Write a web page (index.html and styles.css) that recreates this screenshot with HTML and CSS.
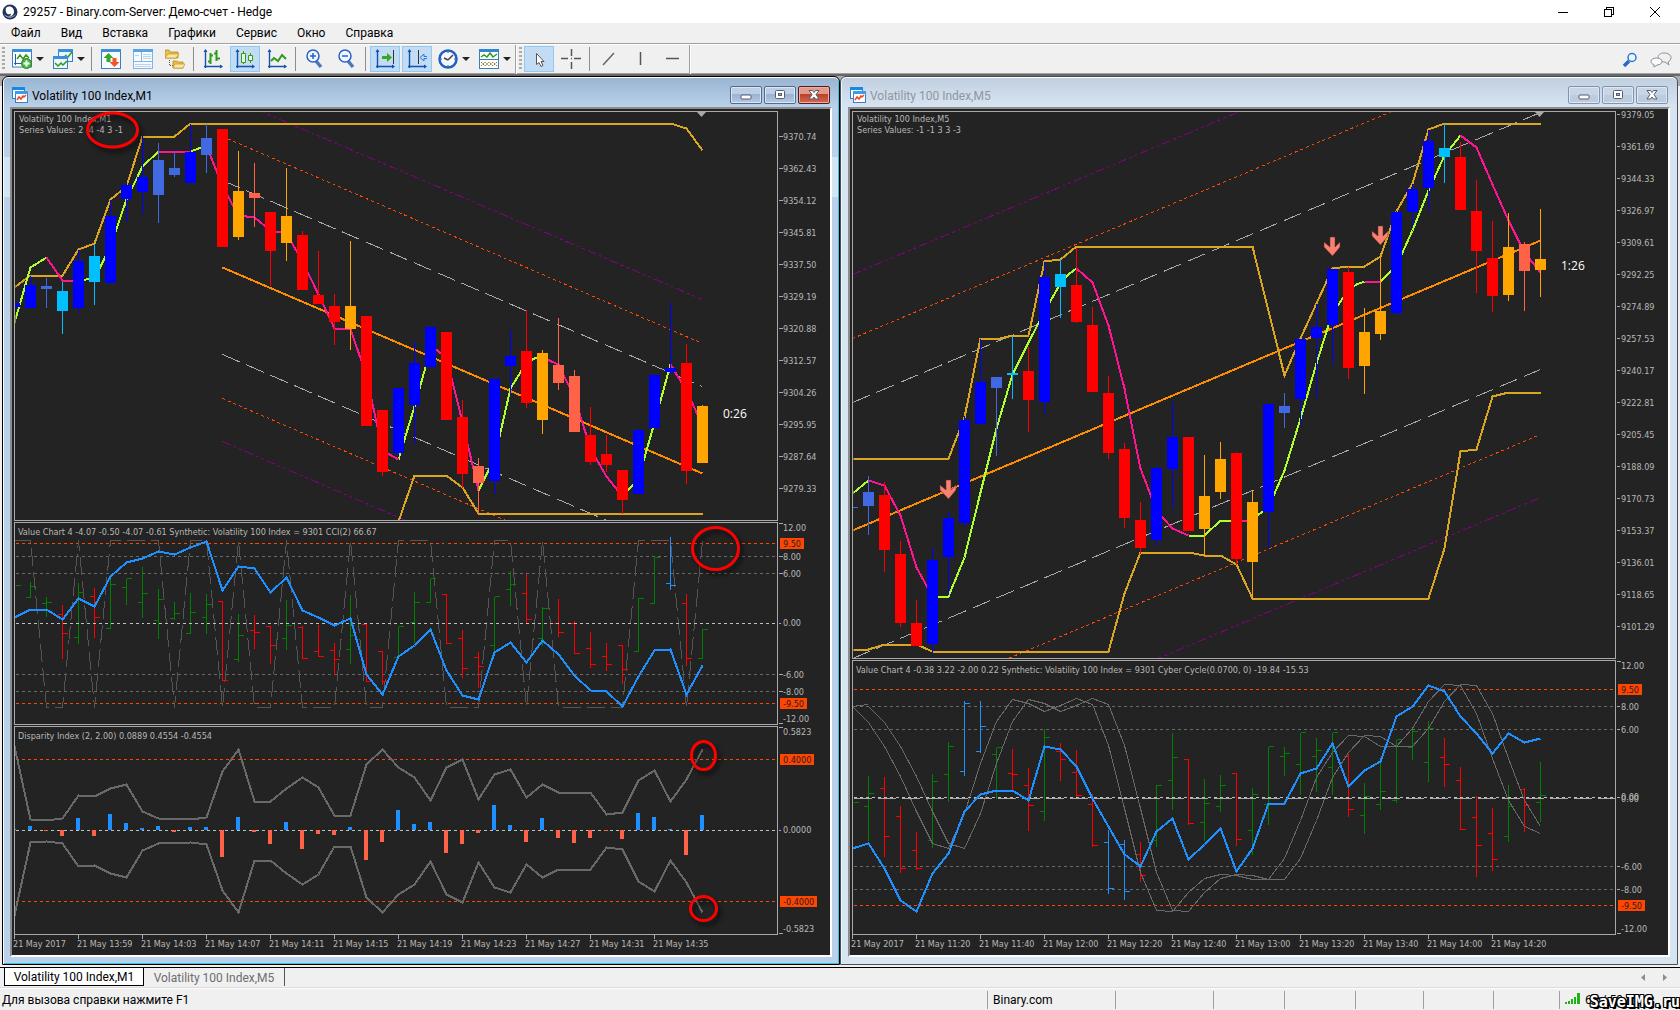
FILE: index.html
```html
<!DOCTYPE html>
<html lang="ru">
<head>
<meta charset="utf-8">
<title>29257 - Binary.com-Server: Демо-счет - Hedge</title>
<link rel="stylesheet" href="styles.css">
</head>
<body>
<svg class="defs" aria-hidden="true">
  <symbol id="i-chart-win" viewBox="0 0 16 16">
    <rect x=".5" y=".5" width="12" height="11" fill="#fff" stroke="#2a7fd0"/><rect width="13" height="3" fill="#1787e8"/>
    <rect x="3.5" y="4.500" width="12" height="11" fill="#fff" stroke="#3a80c0"/><rect x="3" y="4" width="13" height="3" fill="#3d9be9"/>
    <path d="M5 13l2-3 2 2 2-3 1 1 2-2" fill="none" stroke="#f0432a" stroke-width="1.500"/>
  </symbol>
  <symbol id="i-min" viewBox="0 0 12 12"><rect x="1" y="6" width="10" height="4" rx="1" fill="#fff" stroke="#555b70"/></symbol>
  <symbol id="i-max" viewBox="0 0 12 12"><rect x="1.500" y="1.500" width="9" height="8" rx="1" fill="#fff" stroke="#555b70"/><rect x="4.500" y="4.500" width="3" height="2" fill="#9fb8d8" stroke="#555b70"/></symbol>
  <symbol id="i-close" viewBox="0 0 12 12"><path d="M1 1.500h3.500L6 3.500l1.500-2H11L8 5.500l3 4.500H7.500L6 8 4.500 10H1l3-4.500z" fill="#fff" stroke="#555b70"/></symbol>
  <symbol id="i-axes" viewBox="0 0 20 20"><path d="M2.500 19V1M1 17.500h18" fill="none" stroke="#1450b4" stroke-width="1.400"/><path d="M2.500 0L.5 3h4zM20 17.500l-3-2v4z" fill="#1450b4"/></symbol>
</svg>

<header class="titlebar">
  <svg class="logo" viewBox="0 0 16 16"><circle cx="8" cy="8" r="7.500" fill="#22325a"/><path d="M4 4c3-3 8-1 8 3.500C12 11 9 13 6 12.500c2 0 3.500-1.500 3-3C8 11 4.500 10.500 4 8c-.3-1.500-.5-2.500 0-4z" fill="#fff"/><path d="M2 10c2 5 9 5 12 0-3 3-8 4-12 0z" fill="#9fb0cc"/></svg>
  <h1>29257 - Binary.com-Server: Демо-счет - Hedge</h1>
  <div class="sysbtns">
    <button aria-label="Свернуть"><svg viewBox="0 0 10 10"><path d="M0 5.500h10"/></svg></button>
    <button aria-label="Восстановить"><svg viewBox="0 0 10 10"><path d="M.5 2.500h7v7h-7zM2.500 2V.5h7v7H8"/></svg></button>
    <button aria-label="Закрыть"><svg viewBox="0 0 10 10"><path d="M0 0l10 10M10 0L0 10" shape-rendering="auto"/></svg></button>
  </div>
</header>

<nav class="menubar">
  <button>Файл</button><button>Вид</button><button>Вставка</button><button>Графики</button><button>Сервис</button><button>Окно</button><button>Справка</button>
</nav>

<div class="toolbar">
  <div class="tools">
    <i class="grip"></i>
    <button class="drop" aria-label="Новый график"><svg viewBox="0 0 20 20"><rect x=".5" y="1" width="19" height="17" fill="#fff" stroke="#3a80c0"/><rect y="0" width="20" height="3" fill="#3d8fd8"/><path d="M3.500 16V5M2 14.500h11" stroke="#2060b0" fill="none"/><path d="M5 10l3-4 3 4 3-4 3 3" fill="none" stroke="#2f9a1c" stroke-width="1.500"/><circle cx="14.500" cy="14.500" r="5" fill="#4fb53c" stroke="#2b8a1c"/><path d="M14.500 11.500v6M11.500 14.500h6" stroke="#fff" stroke-width="2"/></svg></button>
    <button class="drop" aria-label="Профили"><svg viewBox="0 0 20 20"><rect x="5.500" y=".5" width="14" height="12" fill="#eaf4fc" stroke="#3a80c0"/><rect x="5" width="15" height="3" fill="#3d8fd8"/><path d="M12 6l3 2 4-5" stroke="#2f9a1c" stroke-width="1.500" fill="none"/><rect x=".5" y="7.500" width="14" height="12" fill="#eaf4fc" stroke="#3a80c0"/><rect y="7" width="15" height="3" fill="#3d8fd8"/><path d="M2 14l3 3 3-3 2 2 4-4" stroke="#2f9a1c" stroke-width="1.500" fill="none"/></svg></button>
    <i class="sep"></i>
    <button aria-label="Обзор рынка"><svg viewBox="0 0 20 20"><rect x=".5" y=".5" width="19" height="19" fill="#f4fafe" stroke="#3a80c0"/><rect width="20" height="3" fill="#3d8fd8"/><path d="M7.500 4l5 5h-3v4h-4V9h-3z" fill="#39a82a"/><path d="M13.500 18l5-5h-3V9h-4v4h-3z" fill="#f0552c"/></svg></button>
    <button aria-label="Навигатор"><svg viewBox="0 0 20 20"><rect x=".5" y=".5" width="19" height="19" fill="#f4fafe" stroke="#7fb4e4"/><rect width="20" height="3" fill="#5aa4e4"/><path d="M8.500 3v9M1 12.500h18" stroke="#7fb4e4"/><path d="M10 5.500h8M10 7.500h8M10 9.500h8M2 15.500h16M2 17.500h16M2 6.500h4" stroke="#bcd4ea"/></svg></button>
    <button aria-label="Папка данных"><svg viewBox="0 0 20 20"><path d="M0 1h4l1 2h8v6H0z" fill="#e8c04c" stroke="#b48a20" stroke-width=".8"/><path d="M0 9l3-4h11l-3 4z" fill="#fbe79a" stroke="#b48a20" stroke-width=".6"/><path d="M4.500 11v5.500H8" stroke="#555" stroke-dasharray="1 1" fill="none"/><path d="M8 12h4l1 1h5v6H8z" fill="#e8c04c" stroke="#b48a20" stroke-width=".8"/><path d="M8 19l2-4h10l-2 4z" fill="#fbe79a" stroke="#b48a20" stroke-width=".6"/></svg></button>
    <i class="sep"></i>
    <button aria-label="Бары"><svg viewBox="0 0 20 20"><use href="#i-axes"/><path d="M7.500 4v11M5 12.500h2.500M7.500 6.500H10M13.500 1v11M11 4.500h2.500M13.500 9.500H17" stroke="#2f9a1c" stroke-width="2" fill="none"/></svg></button>
    <button class="on" aria-label="Свечи"><svg viewBox="0 0 20 20"><use href="#i-axes"/><path d="M8.500 2v13M15.500 4v10" stroke="#2f9a1c"/><path d="M6.500 4.500h4v9h-4zM13.500 6.500h4v5h-4z" fill="#e8fae0" stroke="#2f9a1c"/></svg></button>
    <button aria-label="Линия"><svg viewBox="0 0 20 20"><use href="#i-axes"/><path d="M4 12l3-3 4 3 4-6 4 4" stroke="#2f9a1c" stroke-width="2" fill="none"/></svg></button>
    <i class="sep"></i>
    <button aria-label="Увеличить"><svg viewBox="0 0 20 20"><path d="M11 12l5 6" stroke="#4a78b8" stroke-width="3.500"/><circle cx="8" cy="7" r="6" fill="#eef6ff" stroke="#2a62c4" stroke-width="1.500"/><path d="M8 4v6M5 7h6" stroke="#2a62c4" stroke-width="1.500"/></svg></button>
    <button aria-label="Уменьшить"><svg viewBox="0 0 20 20"><path d="M11 12l5 6" stroke="#4a78b8" stroke-width="3.500"/><circle cx="8" cy="7" r="6" fill="#eef6ff" stroke="#2a62c4" stroke-width="1.500"/><path d="M5 7h6" stroke="#2a62c4" stroke-width="1.500"/></svg></button>
    <i class="sep"></i>
    <button class="on" aria-label="Автопрокрутка"><svg viewBox="0 0 20 20"><use href="#i-axes"/><path d="M18.500 1v14" stroke="#333"/><path d="M7 7h5V4l5 4.500-5 4.500v-3H7z" fill="#35a824"/></svg></button>
    <button class="on" aria-label="Сдвиг графика"><svg viewBox="0 0 20 20"><use href="#i-axes"/><path d="M11.500 1v14" stroke="#333"/><path d="M20 7.500h-3V5l-4 3.500 4 3.500V9.500h3" fill="none" stroke="#2a78d8"/></svg></button>
    <button class="drop" aria-label="Таймфрейм"><svg viewBox="0 0 20 20"><circle cx="10" cy="10" r="8.500" fill="#f4f9ff" stroke="#1d5fc4" stroke-width="2.500"/><path d="M10 11l5-5M10 11l-4-2" stroke="#444" stroke-width="1.500"/><path d="M10 3v1M10 16v1M3 10h1M16 10h1" stroke="#555"/></svg></button>
    <button class="drop" aria-label="Шаблоны"><svg viewBox="0 0 20 20"><rect x=".5" y=".5" width="19" height="19" fill="#fff" stroke="#3a80c0"/><rect width="20" height="3" fill="#2f86d8"/><path d="M1 10.500h18" stroke="#3a80c0"/><path d="M2 8l3-2 3 2 3-4 3 4 4-3" stroke="#2f9a1c" stroke-width="1.500" fill="none"/><path d="M2 17l4-4 4 4 4-4 4 4" stroke="#f0552c" fill="none" stroke-dasharray="2 1"/><path d="M2 13l4 4 4-4 4 4 4-4" stroke="#2f9a1c" fill="none" stroke-dasharray="2 1"/></svg></button>
  </div>
  <div class="tools">
    <i class="grip"></i>
    <button class="on" aria-label="Курсор"><svg viewBox="0 0 20 20"><path d="M7.500 4.500v11l2.500-2 2 4 2-1-2-4h3z" fill="#fff" stroke="#555"/></svg></button>
    <button aria-label="Перекрестие"><svg viewBox="0 0 20 20"><path d="M10.500 0v7M10.500 13v7M0 9.500h7M13 9.500h7M10 9.500h1" stroke="#555" stroke-width="1.500"/></svg></button>
    <i class="sep"></i>
    <button aria-label="Трендовая линия"><svg viewBox="0 0 20 20"><path d="M4 16L15 4" stroke="#666" stroke-width="1.500"/></svg></button>
    <button aria-label="Вертикальная линия"><svg viewBox="0 0 20 20"><path d="M9.500 3v13" stroke="#555" stroke-width="1.500"/></svg></button>
    <button aria-label="Горизонтальная линия"><svg viewBox="0 0 20 20"><path d="M3 9.500h13" stroke="#555" stroke-width="1.500"/></svg></button>
  </div>
  <div class="extras">
    <button aria-label="Поиск"><svg viewBox="0 0 20 20"><path d="M9 11l-5 5" stroke="#2a68c8" stroke-width="3.500"/><circle cx="12" cy="7.500" r="4" fill="#eef6ff" stroke="#2a78d8" stroke-width="1.500"/></svg></button>
    <button aria-label="Чат"><svg viewBox="0 0 22 20"><path d="M14 3c4 0 7 2 7 4.500S19 12 18 12l1 3-4-3c-4 0-7-2-7-4.500S10 3 14 3z" fill="#eef0f2" stroke="#8a8f96"/><path d="M6.500 8C10 8 12 9.500 12 11.500S10 15 7 15l-3 2v-2.500c-2-.5-3-1.500-3-3C1 9.500 3 8 6.500 8z" fill="#fafbfc" stroke="#8a8f96"/></svg></button>
  </div>
</div>

<main class="desk">
  <section class="win active">
    <header>
      <svg class="wicon"><use href="#i-chart-win"/></svg><h2>Volatility 100 Index,M1</h2>
      <button aria-label="Свернуть"><svg><use href="#i-min"/></svg></button><button aria-label="Развернуть"><svg><use href="#i-max"/></svg></button><button class="x" aria-label="Закрыть"><svg><use href="#i-close"/></svg></button>
    </header>
    <div class="client">
    <svg class="chart" viewBox="12 109 818 846">
      <defs>
        <clipPath id="clip-m1"><rect x="15" y="112" width="762" height="408"/></clipPath>
      </defs>
      <g class="px">
        <g clip-path="url(#clip-m1)">
          <path class="ch-purple" d="M256 109L702 299M222 441L410 522"/>
          <path class="ch-red" d="M222 136L702 343M222 398L510 522"/>
          <path class="ch-gray" d="M222 180L702 386M222 354L611 522"/>
          <path class="ch-mid" d="M222 267L702 473"/>
          <path class="gold" d="M14 288L30 276H62L78 250 94 244 110 200 126 187 142 137H174L190 124H670L686 129 702 151M398 522L414 476H446L462 488 478 514H702"/>
          <path class="up" d="M14 322L30 267 46 257M78 280L94 278 110 246 126 199 142 166 158 151M190 151L206 145M398 459L414 406 430 349M478 490L494 458 510 388 526 362 534 358 542 357M622 496L638 478 654 422 670 364"/>
          <path class="down" d="M46 257L62 280H78M158 151H190M206 145L222 186 238 215 254 217 270 230 286 233 302 261 318 294 334 328 350 329 366 375 382 450 398 459M430 345L446 357 462 422 478 490M542 357L558 364 574 397 590 448 606 476 622 496M670 364L686 390 702 425"/>
        </g>
      </g>
      <g class="vx" data-candles="m1"></g>
      <g class="px">
        <path class="level" d="M15 556H776M15 573H776M15 674H776M15 691H776"/>
        <path class="level hot" d="M15 543H776M15 703H776M15 759H776M15 901H776"/>
        <path class="cci" d="M14 540H30L46 707H62L78 540 94 707 110 540H158L174 707 190 540H206L222 707 238 540 254 707H270L286 540 302 707H334L350 540 366 707H382L398 540H430L446 707H478L494 540H510L526 707 542 540 558 707H622L638 540H670L686 707 702 540"/>
        <g data-ohlc="m1"></g>
        <path class="level zero" d="M15 623H776"/>
        <path class="synth" d="M14 617L30 609 46 609 62 619 78 598 94 606 110 576 126 562 142 558 158 551 174 554 190 547 206 541 222 590 238 566 254 568 270 592 286 577 302 610 318 617 334 625 350 618 366 674 382 694 398 656 414 645 430 629 446 670 462 695 478 699 494 652 510 642 526 662 542 640 558 654 574 675 590 690 606 691 622 706 638 676 654 650 670 649 686 694 702 665"/>
        <path id="env" class="env" d="M14 746L30 819 46 820 62 818 78 795 94 796 110 788 126 784 142 811 158 818 190 819 206 817 222 771 238 749 254 801 270 801 286 788 302 777 318 787 334 815 350 815 366 764 382 749 398 767 414 777 430 800 446 767 462 759 478 799 494 774 510 769 526 797 542 784 558 792 590 792 606 814 622 812 638 780 654 770 670 801 686 779 702 749"/>
        <use href="#env" transform="translate(0 1661) scale(1 -1)"/>
        <path class="level zero" d="M15 830H776"/>
      </g>
      <g data-hist="m1"></g>
      <g class="px">
        <path class="frame" d="M777 520H14V111H777V520M14 522H777V724H14zM14 726H777V934H14z"/>
        <path class="frame" d="M778 136h4m-4 32h4m-4 32h4m-4 32h4m-4 32h4m-4 32h4m-4 32h4m-4 32h4m-4 32h4m-4 32h4m-4 32h4m-4 32h4M778 523h4m-4 33h4m-4 17h4m-4 50h2m-2 51h4m-4 17h4m-4 32h4M778 727h4m-4 103h2m-2 103h4"/>
        <path class="frame" d="M14 934v4m64-4v4m64-4v4m64-4v4m64-4v4m64-4v4m64-4v4m64-4v4m64-4v4m64-4v4m64-4v4"/>
      </g>
      <path class="mark" d="M697 112h9l-4.500 5z"/>
      <g class="tag"><rect x="780" y="538" width="24" height="11"/><rect x="780" y="698" width="27" height="11"/><rect x="780" y="754" width="34" height="11"/><rect x="780" y="896" width="37" height="11"/></g>
      <g class="txt">
        <text x="19" y="122">Volatility 100 Index,M1</text><text x="19" y="133">Series Values: 2 -4 -4 3 -1</text>
        <text x="18" y="535">Value Chart 4 -4.07 -0.50 -4.07 -0.61 Synthetic: Volatility 100 Index = 9301 CCI(2) 66.67</text>
        <text x="18" y="739">Disparity Index (2, 2.00) 0.0889 0.4554 -0.4554</text>
        <text x="783" y="140">9370.74</text><text x="783" y="172">9362.43</text><text x="783" y="204">9354.12</text><text x="783" y="236">9345.81</text><text x="783" y="268">9337.50</text><text x="783" y="300">9329.19</text><text x="783" y="332">9320.88</text><text x="783" y="364">9312.57</text><text x="783" y="396">9304.26</text><text x="783" y="428">9295.95</text><text x="783" y="460">9287.64</text><text x="783" y="492">9279.33</text>
        <text x="783" y="531">12.00</text><text x="783" y="547" class="inv">9.50</text><text x="783" y="560">8.00</text><text x="783" y="577">6.00</text><text x="783" y="626">0.00</text><text x="783" y="678">-6.00</text><text x="783" y="695">-8.00</text><text x="783" y="707" class="inv">-9.50</text><text x="783" y="722">-12.00</text>
        <text x="783" y="735">0.5823</text><text x="783" y="763" class="inv">0.4000</text><text x="783" y="833">0.0000</text><text x="783" y="905" class="inv">-0.4000</text><text x="783" y="932">-0.5823</text>
        <text x="13" y="947">21 May 2017</text><text x="77" y="947">21 May 13:59</text><text x="141" y="947">21 May 14:03</text><text x="205" y="947">21 May 14:07</text><text x="269" y="947">21 May 14:11</text><text x="333" y="947">21 May 14:15</text><text x="397" y="947">21 May 14:19</text><text x="461" y="947">21 May 14:23</text><text x="525" y="947">21 May 14:27</text><text x="589" y="947">21 May 14:31</text><text x="653" y="947">21 May 14:35</text>
      </g>
      <text class="clock" x="723" y="418">0:26</text>
      <g class="rings"><ellipse cx="112.500" cy="130" rx="25" ry="17"/><ellipse cx="715.500" cy="548.500" rx="23" ry="21"/><ellipse cx="703.500" cy="755.500" rx="12" ry="14"/><ellipse cx="703.500" cy="908.500" rx="13" ry="12"/></g>
    </svg>
    </div>
  </section>

  <section class="win">
    <header>
      <svg class="wicon"><use href="#i-chart-win"/></svg><h2>Volatility 100 Index,M5</h2>
      <button aria-label="Свернуть"><svg><use href="#i-min"/></svg></button><button aria-label="Развернуть"><svg><use href="#i-max"/></svg></button><button aria-label="Закрыть"><svg><use href="#i-close"/></svg></button>
    </header>
    <div class="client">
    <svg class="chart" viewBox="850 109 818 846">
      <defs>
        <clipPath id="clip-m5"><rect x="853" y="112" width="762" height="546"/></clipPath>
        <path id="arrow" d="M-2 0h5v10l5-5v5L.5 19-8 10V5l6 5z"/>
      </defs>
      <g class="px">
        <g clip-path="url(#clip-m5)">
          <path class="ch-purple" d="M852 274L1244 109M1153 660L1540 497"/>
          <path class="ch-red" d="M852 338L1396 109M1003 660L1540 434"/>
          <path class="ch-gray" d="M852 402L1540 112M852 658L1540 369"/>
          <path class="ch-mid" d="M852 530L1540 240"/>
          <path class="gold" d="M852 459H948L964 418 980 339H1000L1012 336H1028L1044 262 1060 260 1076 247H1252L1284 376 1300 339 1316 304 1332 269 1348 267H1364L1380 257 1396 212 1412 184 1428 130 1444 124H1540M852 650H868L884 645H916L932 652H1108L1124 594 1140 553H1188L1204 556H1220L1236 565 1252 599H1428L1444 549 1460 452 1476 450 1492 397 1508 393H1540"/>
          <path class="up" d="M852 493L868 480M932 596H948L964 557 980 492 996 428 1012 374 1028 342 1044 311 1060 283 1068 274 1076 268M1188 535H1204L1220 520H1236M1250 520L1268 507 1284 470 1300 418 1316 363 1332 312 1348 290 1356 284 1364 281M1380 281L1396 265 1412 230 1428 190 1444 155 1460 135"/>
          <path class="down" d="M868 480L884 485 900 515 916 567 932 596M1076 268L1092 282 1108 325 1124 388 1140 468 1156 510 1172 528 1188 535M1236 520H1250M1364 281H1380M1460 135L1476 147 1492 184 1508 220 1524 252 1540 272"/>
        </g>
      </g>
      <g class="arrows"><use href="#arrow" x="948" y="480"/><use href="#arrow" x="1332" y="237"/><use href="#arrow" x="1380" y="226"/></g>
      <g class="vx" data-candles="m5"></g>
      <g class="px">
        <path class="level" d="M853 706H1614M853 729H1614M853 866H1614M853 889H1614"/>
        <path class="level hot" d="M853 689H1614M853 905H1614"/>
        <g data-ohlc="m5"></g>
        <path id="cyc" class="cyc" d="M852 706L868 722 884 746 900 776 916 811 932 843 948 848 964 813 980 763 996 721 1012 699 1028 703 1044 711 1060 705 1076 698 1092 704 1108 745 1124 808 1140 872 1156 910 1172 911 1188 892 1204 878 1220 874 1236 875 1252 879 1268 879 1284 858 1300 820 1316 777 1332 752 1348 735 1364 736 1380 746 1396 746 1412 728 1428 701 1444 684 1460 685 1476 713 1492 758 1508 800 1524 826"/>
        <use href="#cyc" x="16"/><path class="cyc" d="M852 706L868 704M1524 826L1540 833"/>
        <path class="level zero" d="M853 797H1614"/><path class="level zero long" d="M853 798H1614"/>
        <path class="synth" d="M852 848L868 843 884 868 900 900 916 911 932 873 948 853 964 811 980 794 996 790 1012 790 1028 800 1044 746 1060 749 1076 766 1092 798 1108 826 1124 854 1140 866 1156 831 1172 818 1188 859 1204 844 1220 828 1236 871 1252 848 1268 803 1284 803 1300 773 1316 768 1332 743 1348 786 1364 770 1380 761 1396 716 1412 706 1428 685 1444 691 1460 716 1476 733 1492 753 1508 733 1524 742 1540 738"/>
        <path class="frame" d="M852 111H1615V658H852zM852 660H1615V934H852z"/>
        <path class="frame" d="M1616 114h3m-3 32h3m-3 32h3m-3 32h3m-3 32h3m-3 32h3m-3 32h3m-3 32h3m-3 32h3m-3 32h3m-3 32h3m-3 32h3m-3 32h3m-3 32h3m-3 32h3m-3 32h3m-3 32h3M1616 661h4m-4 45h3m-3 23h3m-3 68h3m-3 69h3m-3 23h3m-3 44h4"/>
        <path class="frame" d="M852 934v4m64-4v4m64-4v4m64-4v4m64-4v4m64-4v4m64-4v4m64-4v4m64-4v4m64-4v4m64-4v4"/>
      </g>
      <path class="mark" d="M1535 112h9l-4.500 5z"/>
      <g class="tag"><rect x="1618" y="684" width="24" height="11"/><rect x="1618" y="900" width="27" height="11"/></g>
      <g class="txt">
        <text x="857" y="122">Volatility 100 Index,M5</text><text x="857" y="133">Series Values: -1 -1 3 3 -3</text>
        <text x="856" y="673">Value Chart 4 -0.38 3.22 -2.00 0.22 Synthetic: Volatility 100 Index = 9301 Cyber Cycle(0.0700, 0) -19.84 -15.53</text>
        <text x="1621" y="118">9379.05</text><text x="1621" y="150">9361.69</text><text x="1621" y="182">9344.33</text><text x="1621" y="214">9326.97</text><text x="1621" y="246">9309.61</text><text x="1621" y="278">9292.25</text><text x="1621" y="310">9274.89</text><text x="1621" y="342">9257.53</text><text x="1621" y="374">9240.17</text><text x="1621" y="406">9222.81</text><text x="1621" y="438">9205.45</text><text x="1621" y="470">9188.09</text><text x="1621" y="502">9170.73</text><text x="1621" y="534">9153.37</text><text x="1621" y="566">9136.01</text><text x="1621" y="598">9118.65</text><text x="1621" y="630">9101.29</text>
        <text x="1621" y="669">12.00</text><text x="1621" y="693" class="inv">9.50</text><text x="1621" y="710">8.00</text><text x="1621" y="733">6.00</text><text x="1621" y="800">0.00</text><text x="1621" y="802">0.00</text><text x="1621" y="870">-6.00</text><text x="1621" y="893">-8.00</text><text x="1621" y="909" class="inv">-9.50</text><text x="1621" y="932">-12.00</text>
        <text x="851" y="947">21 May 2017</text><text x="915" y="947">21 May 11:20</text><text x="979" y="947">21 May 11:40</text><text x="1043" y="947">21 May 12:00</text><text x="1107" y="947">21 May 12:20</text><text x="1171" y="947">21 May 12:40</text><text x="1235" y="947">21 May 13:00</text><text x="1299" y="947">21 May 13:20</text><text x="1363" y="947">21 May 13:40</text><text x="1427" y="947">21 May 14:00</text><text x="1491" y="947">21 May 14:20</text>
      </g>
      <text class="clock" x="1561" y="270">1:26</text>
    </svg>
    </div>
  </section>
</main>

<div class="tabs">
  <button class="sel">Volatility 100 Index,M1</button><button>Volatility 100 Index,M5</button>
  <div class="scroll"><button aria-label="Назад"><svg viewBox="0 0 6 8"><path d="M5 0v7L1 3.500z"/></svg></button><button aria-label="Вперед"><svg viewBox="0 0 6 8"><path d="M1 0v7l4-3.500z"/></svg></button></div>
</div>

<footer class="status">
  <span class="hint">Для вызова справки нажмите F1</span>
  <span class="c128">Binary.com</span><span class="c98"></span><span class="c71"></span><span class="c71"></span><span class="c68"></span><span class="c70"></span><span class="c66"></span>
  <span class="net"><svg viewBox="0 0 16 12"><path d="M0 9h2v2H0zM3 8h2v3H3zM6 6h2v5H6zM9 4h2v7H9zM12 0h3v11h-3z" fill="#22b114"/></svg>65 / 59 Kb</span>
  <b class="stamp">SaveIMG.ru</b>
</footer>
<script src="charts.js"></script>
</body>
</html>
```
FILE: styles.css
```css
* { box-sizing: border-box; }
body {
  margin: 0;
  min-height: 100vh;
  display: flex;
  flex-direction: column;
  background: #f0f0f0;
  color: #000;
  font: 12px/16px Roboto, "Noto Sans", sans-serif;
}
button { margin: 0; padding: 0; border: 0; background: none; color: inherit; font: inherit; }
h1, h2 { margin: 0; font: inherit; }
.defs { position: absolute; width: 0; height: 0; }

.titlebar { display: flex; align-items: center; height: 23px; padding: 0 2px; background: #fff; }
.logo { width: 16px; height: 16px; margin-right: 5px; }
.sysbtns { display: flex; margin-left: auto; }
.sysbtns button { width: 46px; height: 20px; display: grid; place-items: center; }
.sysbtns svg { width: 10px; height: 10px; fill: none; stroke: #000; shape-rendering: crispEdges; }

.menubar { display: flex; height: 21px; padding: 0 1px; border-bottom: 1px solid #a0a0a0; }
.menubar button { padding: 0 10px; }

.toolbar { display: flex; height: 32px; border-top: 1px solid #fff; border-bottom: 2px solid #696969; box-shadow: inset 0 -1px #a0a0a0; }
.tools { display: flex; align-items: center; gap: 2px; padding: 0 1px 1px 2px; border-right: 1px solid #a0a0a0; box-shadow: 1px 0 #fff; }
.tools button { width: 30px; height: 26px; padding: 2px 4px; border: 1px solid transparent; }
.tools button.on { background: #c2dcf3; border-color: #90c8f6; }
.tools svg, .extras svg { display: block; flex: none; width: 20px; height: 20px; }
.tools .drop { display: flex; align-items: center; width: 39px; padding: 2px 0 2px 3px; }
.drop::after { content: ""; margin-left: 4px; border: 4px solid transparent; border-top-color: #222; border-bottom: 0; }
.grip { width: 3px; height: 24px; margin-right: 1px; background: repeating-linear-gradient(#aaa 0 2px, transparent 2px 4px); }
.tools + .tools { padding-left: 3px; }
.tools + .tools .grip { margin-right: 0; }
.sep { width: 4px; height: 24px; background: linear-gradient(90deg, transparent 1px, #8c8c8c 1px 2px, transparent 2px); }
.extras { display: flex; align-items: center; gap: 10px; margin-left: auto; padding-right: 8px; }
.extras button:last-child svg { width: 22px; }

.desk { flex: 1; display: flex; align-items: flex-start; padding: 0 2px 2px; background: linear-gradient(#ababab 0 10px, #f0f0f0 10px); }
.win {
  flex: 1;
  min-width: 0;
  padding: 0 7px 7px;
  border: 1px solid #4a4e55;
  border-radius: 6px 6px 0 0;
  background: linear-gradient(#c0cfdf 0, #d7e4f2 30px);
  box-shadow: inset 0 1px #fff, inset 1px 0 #eef4fa;
}
.win.active {
  border-color: #000;
  background: linear-gradient(#99b4d1 0, #b9d1ea 30px, #b9d1ea 80px, #d3e4f4 80px 120px, #b9d1ea 120px);
  box-shadow: inset 0 1px #fff, inset 1px 0 #fff, inset -1px -1px #2fc4e4;
}
.win header { display: flex; align-items: center; gap: 2px; height: 30px; padding: 6px 2px 0; }
.wicon { width: 16px; height: 16px; margin-right: 2px; }
.win h2 { flex: 1; color: #8f969e; padding-top: 1px; }
.win.active h2 { color: #000; }
.win header button { width: 32px; height: 18px; display: grid; place-items: center; border: 1px solid #8494b0; border-radius: 2px; background: linear-gradient(#c7d5e6 50%, #bccbdd 50%); box-shadow: inset 0 0 0 1px #dce7f3; }
.win.active header button { border-color: #566a8c; background: linear-gradient(#bccfe6 45%, #9ab3d2 45%, #b4c9e4); }
.win.active header .x { border-color: #551c20; background: linear-gradient(#e09a8c 45%, #bb4028 45%, #d06a50); box-shadow: inset 0 0 0 1px #e8b0a4; }
.win header button svg { width: 12px; height: 12px; }
.client { border: 2px solid; border-color: #8c8c8c #fff #fff #8c8c8c; background: #232323; }
.chart { display: block; width: 100%; height: auto; background: #232323; }

.px { transform: translate(0.5px, 0.5px); shape-rendering: crispEdges; }
.vx { transform: translate(0.5px, 0); shape-rendering: crispEdges; }
.px path, .vx path { fill: none; stroke-width: 1px; }
.px .frame { stroke: #a9a9a9; }
.px .ch-purple { stroke: #800080; stroke-dasharray: 9 3 3 3 3 3; }
.px .ch-red { stroke: #ff4500; stroke-dasharray: 3 3; }
.px .ch-gray { stroke: #a9a9a9; stroke-dasharray: 19 7; }
.px .ch-mid { stroke: #ff8c00; stroke-width: 2px; }
.px .gold { stroke: #daa520; stroke-width: 2px; transform: translate(0, -1px); }
.px .up { stroke: #adff2f; stroke-width: 2px; }
.px .down { stroke: #ff1493; stroke-width: 2px; }
.px .level { stroke: #696969; stroke-dasharray: 3 3; }
.px .hot { stroke: #ff4500; }
.px .zero { stroke: #c0c0c0; }
.px .long { stroke-dasharray: 18 6; stroke: #a9a9a9; }
.px .cci { stroke: #555; stroke-dasharray: 18 6; }
.px .synth { stroke: #1e90ff; stroke-width: 2px; }
.px .env { stroke: #696969; stroke-width: 2px; }
.px .cyc { stroke: #696969; }
.vx .body { stroke-width: 11px; }
.mark { fill: #a9a9a9; }
.tag { fill: #ff4500; }
.arrows { fill: #fa8072; stroke: #5a2a28; stroke-width: 0.5px; }
.txt { fill: #b8b8b8; font: 9px "DejaVu Sans Condensed", "DejaVu Sans", sans-serif; white-space: pre; }
.txt .inv { fill: #232323; }
.clock { fill: #fff; font: 12px "Open Sans", "Noto Sans", sans-serif; }
.rings { fill: none; stroke: #f00; stroke-width: 3px; filter: drop-shadow(3px 4px 2px rgba(0, 0, 0, 0.6)); }

.tabs { display: flex; height: 21px; padding-left: 4px; border-top: 1px solid #000; border-bottom: 1px solid #dcdcdc; }
.tabs > button { width: 141px; padding: 1px 0 0; border-right: 1px solid #555; color: #6d6d6d; height: 18px; }
.tabs .sel { width: 140px; background: #fff; border: 1px solid #000; border-top: 0; color: #000; }
.scroll { display: flex; gap: 16px; margin-left: auto; padding: 0 12px 0 0; align-items: center; }
.scroll svg { display: block; width: 6px; height: 8px; fill: #8c8c8c; }

.status { position: relative; display: flex; height: 22px; padding: 2px 0 0 2px; border-top: 1px solid #fff; line-height: 18px; }
.status span { height: 18px; }
.status .hint { flex: 1; }
.status .hint ~ span { border-left: 1px solid #a0a0a0; padding-left: 5px; }
.c128 { width: 128px; }
.c98 { width: 98px; }
.c71 { width: 71px; }
.c68 { width: 68px; }
.c70 { width: 70px; }
.c66 { width: 66px; }
.status .net { width: 121px; white-space: nowrap; }
.net svg { width: 16px; height: 12px; margin-right: 4px; vertical-align: -1px; }
.stamp {
  position: absolute;
  right: 0;
  bottom: 0;
  color: #fff;
  font: bold 15px/16px "DejaVu Sans Mono", monospace;
  text-shadow: 1px 0 #000, -1px 0 #000, 0 1px #000, 0 -1px #000, 1px 1px #000, -1px -1px #000, 1px -1px #000, -1px 1px #000, 2px 1px #000, 2px 2px #000;
}
```
FILE: charts.js
```js
// Quote data for both charts: one entry per bar, bars are 16 units apart.
const STEP = 16;
const COLORS = {
  B: '#0000ff', R: '#ff0000', O: '#ffa500', L: '#4169e1',
  D: '#00bfff', T: '#ff6347', G: '#008000', A: '#1e90ff'
};

// colour, wick top, wick bottom, body top, body bottom
const CANDLES = {
  m1: { x: 30, rows: `B 276 308 285 308;L 278 308 286 289;D 282 334 291 311;B 250 313 261 308;D 244 305 256 282;B 200 283 216 283;B 183 222 185 199;B 136 214 177 192;L 143 223 160 195;L 152 177 168 175;B 124 183 152 183;L 124 173 138 155;R 129 247 129 247;O 151 240 191 237;T 163 227 193 198;R 212 286 212 251;O 168 261 216 243;R 231 290 235 290;R 251 304 295 304;R 294 345 306 322;O 241 350 306 329;R 316 426 316 426;R 410 476 410 472;B 388 457 388 453;B 341 444 363 405;B 327 367 327 367;R 332 420 332 420;R 400 488 417 474;T 458 514 466 483;B 379 494 379 481;B 330 395 356 366;R 310 408 351 403;O 350 434 353 420;T 318 390 365 383;T 370 432 376 432;R 407 465 435 462;R 435 472 454 465;R 470 514 470 500;B 429 494 430 494;B 375 428 375 428;B 303 374 368 372;R 344 484 363 471;O 405 463 406 463` },
  m5: { x: 868, rows: `L 476 535 492 506;R 482 572 495 550;R 541 627 554 623;R 600 646 623 646;B 548 653 560 644;B 512 595 518 557;B 416 526 420 523;B 339 424 382 424;L 377 456 377 388;D 336 399 373 375;R 347 432 371 400;B 262 414 277 402;D 260 318 274 287;R 248 323 285 322;R 307 392 325 392;R 376 459 393 453;R 443 528 449 518;R 502 554 520 548;B 466 546 468 540;B 402 509 437 469;R 437 531 437 531;O 455 556 496 529;O 442 499 459 492;R 452 565 453 559;O 490 599 502 562;B 404 548 404 512;L 393 428 406 413;B 339 425 339 399;B 304 398 327 338;B 269 365 269 325;R 267 379 272 368;O 308 394 332 366;O 257 340 311 334;B 211 315 212 313;B 184 226 189 212;B 130 211 141 188;D 124 183 148 157;R 142 210 157 210;R 180 293 211 251;R 221 312 258 296;O 213 301 247 295;T 242 311 244 271;O 209 297 259 270` }
};

// colour, high, low, open, close
const BARS = {
  m1: { x: 30, rows: `G 581 597 597 586;G 596 616 603 602;R 604 658 614 633;G 582 643 637 592;R 587 637 596 617;G 574 628 628 584;G 578 604 587 578;G 566 617 602 593;G 588 638 620 599;G 601 619 618 613;G 592 633 633 612;G 593 633 617 604;R 601 680 601 680;G 613 661 659 635;R 614 648 630 632;R 626 663 626 645;G 599 649 638 625;R 625 658 627 658;R 624 656 651 656;R 642 674 650 659;G 594 663 649 635;R 624 681 624 681;R 651 684 651 681;G 626 657 657 626;G 591 642 622 602;G 578 602 602 578;R 594 643 594 643;R 629 677 638 668;R 651 687 657 666;G 596 650 645 596;G 570 605 589 584;R 573 623 593 619;G 606 645 638 608;R 598 636 623 632;R 620 653 623 653;R 631 667 648 664;R 642 670 656 664;R 645 683 645 669;G 597 651 651 598;G 557 603 603 557;A 536 589 583 585;R 593 665 603 658;G 628 658 658 629` },
  m5: { x: 868, rows: `G 775 840 806 793;R 776 856 788 836;R 805 872 816 868;R 831 869 850 868;G 773 847 840 781;G 741 801 774 746;A 700 775 771 703;A 700 752 751 726;G 747 798 754 747;R 748 790 773 774;R 767 830 785 805;G 728 820 811 737;R 742 780 751 759;R 749 796 772 795;R 793 846 804 845;A 829 893 842 888;A 839 899 844 891;R 841 881 854 875;G 784 846 840 785;G 732 809 780 757;R 759 824 759 823;G 778 840 822 803;G 774 811 806 785;R 772 845 773 839;G 787 854 830 794;G 746 824 804 746;G 746 775 756 753;G 732 794 764 732;G 737 791 756 750;G 732 794 767 732;R 753 816 756 809;G 782 833 815 796;G 760 809 804 791;G 739 802 800 739;G 729 759 747 731;G 720 781 762 728;R 737 786 757 764;R 766 829 780 829;R 795 876 817 845;R 807 870 833 859;G 784 841 836 806;R 787 831 789 805;G 761 821 802 795` }
};

// Disparity histogram: bar ends, measured against the zero line
const HIST_ZERO = 830;
const HIST = [829, 826, 831, 836, 818, 836, 814, 823, 828, 826, 832, 827, 827, 857, 817, 832, 844, 822, 849, 834, 835, 827, 860, 842, 810, 824, 822, 853, 844, 833, 805, 825, 842, 818, 838, 843, 838, 831, 839, 813, 817, 829, 855, 815];

// Bars cut by the left edge of the plot
const EDGE = {
  m1: { candle: ['B', 17, 303, 307, 5], tick: 'M15 585H20' },
  m5: { candle: ['L', 855, 507, 508, 5], tick: 'M853 802H858' }
};

function add(parent, tag, attrs) {
  const el = document.createElementNS('http://www.w3.org/2000/svg', tag);
  for (const k in attrs) el.setAttribute(k, attrs[k]);
  parent.appendChild(el);
  return el;
}

function each(set, fn) {
  set.rows.split(';').forEach((row, i) => {
    const [c, ...n] = row.split(' ');
    fn(set.x + i * STEP, COLORS[c], ...n.map(Number));
  });
}

document.querySelectorAll('[data-candles]').forEach(g => {
  const key = g.dataset.candles;
  const [c, ex, a, b, w] = EDGE[key].candle;
  add(g, 'rect', { x: ex - 2.5, y: a, width: w, height: b - a, fill: COLORS[c] });
  each(CANDLES[key], (x, color, hi, lo, top, bottom) => {
    add(g, 'path', { d: `M${x} ${hi}V${lo}`, stroke: color });
    add(g, 'path', { d: `M${x} ${top}V${bottom}`, stroke: color, class: 'body' });
  });
});

document.querySelectorAll('[data-ohlc]').forEach(g => {
  const key = g.dataset.ohlc;
  add(g, 'path', { d: EDGE[key].tick, stroke: COLORS.G });
  each(BARS[key], (x, color, hi, lo, open, close) => {
    add(g, 'path', { d: `M${x} ${hi}V${lo}M${x - 5} ${open}H${x}M${x} ${close}H${x + 5}`, stroke: color });
  });
});

document.querySelectorAll('[data-hist]').forEach(g => {
  HIST.forEach((end, i) => {
    const up = end < HIST_ZERO;
    const x = Math.max(15, 14 + i * STEP - 2);
    add(g, 'rect', {
      x, width: i ? 4 : 1, y: up ? end : HIST_ZERO,
      height: Math.abs(end - HIST_ZERO), fill: up ? COLORS.A : COLORS.T
    });
  });
});
```
